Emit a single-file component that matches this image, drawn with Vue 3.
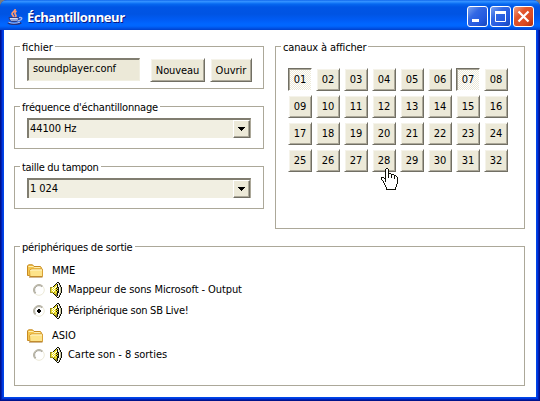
<script setup>
const channels = Array.from({ length: 32 }, (_, i) => String(i + 1).padStart(2, '0'))
const active = ['01', '07']
const combos = [
  { label: "fréquence d'échantillonnage", value: '44100 Hz', cls: 'freq' },
  { label: 'taille du tampon', value: '1 024', cls: 'buffer' },
]
const drivers = [
  {
    name: 'MME',
    outputs: [
      { name: 'Mappeur de sons Microsoft - Output', checked: false, cls: 'mapper' },
      { name: 'Périphérique son SB Live!', checked: true, cls: 'live' },
    ],
  },
  { name: 'ASIO', outputs: [{ name: 'Carte son - 8 sorties', checked: false, cls: 'card' }] },
]

// Pixel maps: one character per pixel
const cursorMap = [
  '.....kk..........',
  '....kwwk.........',
  '....kwwk.........',
  '....kwwk.........',
  '....kwwk.........',
  '....kwwkkk.......',
  '....kwwkwwkkk....',
  '....kwwkwwkwwkk..',
  '....kwwkwwkwwkwk.',
  'kkk.kwwkwwkwwkwwk',
  'kwwkkwwwwwwwwkwwk',
  'kwwwkwwwwwwwwwwwk',
  '.kwwkwwwwwwwwwwwk',
  '..kwkwwwwwwwwwwwk',
  '..kwwwwwwwwwwwwwk',
  '...kwwwwwwwwwwwwk',
  '...kwwwwwwwwwwwk.',
  '....kwwwwwwwwwwk.',
  '....kwwwwwwwwwwk.',
  '.....kwwwwwwwwk..',
  '.....kwwwwwwwwk..',
  '.....kkkkkkkkkk..',
]
const speakerMap = [
  '.......kk...',
  '......kwgk..',
  '.....kykwk..',
  '....kyyk.gk.',
  '...kyywk.gk.',
  'ooywywykk.gk',
  'oywywykyk.gk',
  'oyywyyykk.gk',
  'oywywykyk.gk',
  'oyywyyykk.gk',
  'oooyoyykk.gk',
  '...kyyok.gk.',
  '....kook.gk.',
  '.....kokwk..',
  '......kwgk..',
  '.......kk...',
]
const colors = { k: '#101008', w: '#ffffff', y: '#eee02c', g: '#c9c7a2', o: '#968c22' }
const pixels = (map) =>
  map.flatMap((row, y) =>
    [...row].map((c, x) => ({ x, y, fill: colors[c] })).filter((p) => p.fill)
  )
const cursorPixels = pixels(cursorMap)
const speakerPixels = pixels(speakerMap)
</script>

<template>
  <div class="window">
    <header class="titlebar">
      <svg class="java" width="16" height="16" viewBox="0 0 16 16" fill="none">
        <path d="M8 0c1 2-3.500 3-3 5 .3 1.200 2 1.500 1.500 3.500M9.500 2C7 3.500 8 5 8.700 6s0 2-1 2.500" stroke="#ff9a70" stroke-width="1.600" />
        <path d="M2 8.500h10c-.2 2-1.200 3.500-2.200 4h-5.300c-1.200-.7-2.300-1.700-2.500-4z" fill="#8da2d8" stroke="#242c74" stroke-width=".8" />
        <path d="M3 9.500h7.500" stroke="#d8ddf6" />
        <path d="M12 8.700c4.200-1 3.800 2.500-1.500 3.300" stroke="#a9b4e6" stroke-width="1.300" />
        <path d="M.8 13.800c3 2 10 2 13.500 0" stroke="#28307a" stroke-width="1.600" />
        <path d="M1.500 13.200c3 1.300 8 1.300 11.500 0" stroke="#b4bfe8" stroke-width="1" />
      </svg>
      <span class="title">Échantillonneur</span>
      <div class="controls">
        <button class="ctl"><svg width="21" height="21"><path d="M5 13h7v3H5z" fill="#fff" /></svg></button>
        <button class="ctl"><svg width="21" height="21"><path d="M5.500 5v10.500h10V5" fill="none" stroke="#fff" /><path d="M5 5h11v3H5z" fill="#fff" /></svg></button>
        <button class="ctl close"><svg width="21" height="21"><path d="M5.500 5.500l10 10m0-10l-10 10" stroke="#fff" stroke-width="2.200" /></svg></button>
      </div>
    </header>

    <main class="content">
      <div class="top">
        <div class="left">
          <section class="group">
            <h2 class="legend">fichier</h2>
            <div class="file-row">
              <div class="field">soundplayer.conf</div>
              <button class="btn new">Nouveau</button>
              <button class="btn open">Ouvrir</button>
            </div>
          </section>
          <section v-for="c in combos" :key="c.label" class="group">
            <h2 class="legend" :class="c.cls">{{ c.label }}</h2>
            <div class="combo">
              <span class="value">{{ c.value }}</span>
              <span class="arrow">
                <svg width="7" height="4" shape-rendering="crispEdges"><path d="M0 0h7v1H0zM1 1h5v1H1zM2 2h3v1H2zM3 3h1v1H3z" /></svg>
              </span>
            </div>
          </section>
        </div>

        <section class="group channels">
          <h2 class="legend chan-legend">canaux à afficher</h2>
          <div class="grid">
            <button v-for="n in channels" :key="n" class="btn chan" :class="{ on: active.includes(n) }">
              {{ n }}
              <svg v-if="n === '28'" class="cursor" width="17" height="22" shape-rendering="crispEdges">
                <rect v-for="(p, i) in cursorPixels" :key="i" :x="p.x" :y="p.y" width="1" height="1" :fill="p.fill" />
              </svg>
            </button>
          </div>
        </section>
      </div>

      <section class="group outputs">
        <h2 class="legend out-legend">périphériques de sortie</h2>
        <div class="tree">
          <div v-for="d in drivers" :key="d.name" class="driver">
            <div class="driver-name">
              <svg width="16" height="14" viewBox="0 0 16 14">
                <path d="M.5 11.500V2L1.500.8h4L7 2.500h6.500l.8 1v8z" fill="#f5c64c" stroke="#c78a23" />
                <path d="M1.500 2.500h4.700l1 1h6" stroke="#fff0b0" fill="none" />
                <path d="M3 12.500L2.500 6.500 4 5h11.500v7.500z" fill="#fde389" stroke="#d9a136" />
                <path d="M3.500 7l1-1H15" stroke="#fff7cc" fill="none" />
                <path d="M2 13h13.500" stroke="#a87426" />
              </svg>
              <span>{{ d.name }}</span>
            </div>
            <label v-for="o in d.outputs" :key="o.name" class="output">
              <svg class="radio" width="12" height="12" viewBox="0 0 12 12">
                <circle cx="6" cy="6" r="5.300" fill="#fff" stroke="#ece9d8" />
                <path d="M2.200 9.800A5.300 5.300 0 0 1 9.800 2.200" fill="none" stroke="#aca899" />
                <path d="M2.900 9A4.300 4.300 0 0 1 9 2.900" fill="none" stroke="#8b887b" stroke-width=".7" />
                <path v-if="o.checked" d="M5 4h2v1h1v2H7v1H5V7H4V5h1z" fill="#000" />
              </svg>
              <svg class="speaker" width="12" height="16" shape-rendering="crispEdges">
                <rect v-for="(p, i) in speakerPixels" :key="i" :x="p.x" :y="p.y" width="1" height="1" :fill="p.fill" />
              </svg>
              <span :class="o.cls">{{ o.name }}</span>
            </label>
          </div>
        </div>
      </section>
    </main>
  </div>
</template>

<style>
body {
  margin: 0;
  background: #7b7b7b;
}
</style>

<style scoped>
* {
  box-sizing: border-box;
}
.window {
  width: 540px;
  height: 401px;
  display: flex;
  flex-direction: column;
  overflow: hidden;
  border-radius: 7px 7px 0 0;
  background: #0831d9;
  font: 11px/14px 'DejaVu Sans Condensed', 'DejaVu Sans', sans-serif;
  font-stretch: condensed;
  color: #000;
  white-space: nowrap;
}
.titlebar {
  height: 30px;
  flex: none;
  display: flex;
  align-items: center;
  padding: 3px 6px 0 7px;
  background: linear-gradient(#0058e6 0, #3a93ff 1px, #2a8cff 2px, #0668f0 4px, #0055e5 7px, #0054e3 14px, #005cf5 20px, #0066ff 24px, #0066fe 26px, #0054e8 28px, #0040cb 30px);
}
.title {
  margin-left: 4px;
  font: bold 13px/16px 'Open Sans', sans-serif;
  letter-spacing: -0.4px;
  color: #fff;
  text-shadow: 1px 1px 0 #0a1883;
}
.controls {
  margin-left: auto;
  display: flex;
  gap: 2px;
}
.ctl {
  width: 21px;
  height: 21px;
  padding: 0;
  border: 1px solid #fff;
  border-radius: 3px;
  background: linear-gradient(135deg, #7ba2f0, #3368e4 35%, #2459df 70%, #1747bb);
  overflow: hidden;
}
.ctl svg {
  display: block;
  margin: -1px;
}
.close {
  background: linear-gradient(135deg, #f0a184, #e2552c 35%, #db4a22 70%, #b02f0f);
}
.content {
  flex: 1;
  margin: 0 4px 4px;
  padding: 16px 11px 11px 10px;
  background: #fff;
  box-shadow: 0 0 0 1px #0046e8, 0 0 0 2px #0038dc, 0 0 0 3px #001fb5, 0 0 0 4px #00138c;
  clip-path: inset(0 -4px -4px -4px);
  display: flex;
  flex-direction: column;
  gap: 17px;
}
.top {
  display: grid;
  grid-template-columns: 250px 250px;
  gap: 11px;
  height: 183px;
}
.left {
  display: flex;
  flex-direction: column;
  gap: 17px;
}
.group {
  height: 43px;
  border: 1px solid #aca899;
}
.legend {
  width: fit-content;
  height: 14px;
  margin: -7px 0 0 5px;
  padding: 1px 2px 0;
  background: #fff;
  font: inherit;
}
.freq,
.out-legend {
  letter-spacing: -0.2px;
}
.buffer {
  letter-spacing: -0.3px;
}
.chan-legend {
  letter-spacing: -0.15px;
}
.file-row {
  display: flex;
  padding: 4px 0 0 12px;
}
.field {
  width: 113px;
  height: 23px;
  padding: 2px 0 0 4px;
  background: #ece9d8;
  border-style: solid;
  border-width: 2px 1px 1px 2px;
  border-color: #807d70 #f1efe2 #f1efe2 #807d70;
  letter-spacing: -0.1px;
}
.btn {
  padding: 0;
  border: 1px solid;
  border-color: #fff #716f64 #716f64 #fff;
  background: #ece9d8;
  box-shadow: inset 1px 1px #f5f3ea, inset -1px -1px #aca899;
  font: inherit;
  color: #000;
  height: 24px;
}
.new,
.open {
  padding-top: 1px;
}
.new {
  width: 55px;
  margin-left: 10px;
  letter-spacing: -0.1px;
}
.open {
  width: 42px;
  margin-left: 5px;
}
.combo {
  width: 224px;
  height: 20px;
  margin: 4px 0 0 12px;
  display: flex;
  justify-content: space-between;
  background: #f1efe2;
  border-style: solid;
  border-width: 2px 1px 0 2px;
  border-color: #807d70 #aca899 #fff #807d70;
}
.value {
  padding: 2px 0 0 1px;
  letter-spacing: -0.1px;
}
.arrow {
  width: 17px;
  height: 18px;
  display: flex;
  align-items: center;
  justify-content: center;
  border: 1px solid;
  border-color: #fff #716f64 #716f64 #fff;
  background: #ece9d8;
  box-shadow: inset -1px -1px #aca899;
}
.channels {
  height: 183px;
}
.grid {
  display: grid;
  grid-template-columns: repeat(8, 24px);
  grid-auto-rows: 23px;
  gap: 4px;
  padding: 14px 0 0 12px;
}
.chan {
  position: relative;
  height: 23px;
  letter-spacing: -0.1px;
}
.on {
  border-color: #716f64 #fff #fff #716f64;
  box-shadow: inset 1px 1px #aca899;
  background: repeating-conic-gradient(#ece9d8 0 25%, #fff 0 50%) 0 0 / 2px 2px;
}
.cursor {
  position: absolute;
  left: 8px;
  top: 18px;
  z-index: 1;
}
.outputs {
  height: 140px;
}
.tree {
  display: flex;
  flex-direction: column;
  gap: 6px;
  padding: 8px 0 0 12px;
}
.driver-name,
.output {
  display: flex;
  align-items: center;
}
.driver-name {
  height: 17px;
  gap: 9px;
}
.output {
  height: 21px;
}
.mapper {
  letter-spacing: -0.1px;
}
.live {
  letter-spacing: -0.25px;
}
.card {
  letter-spacing: -0.05px;
}
.radio {
  margin-left: 6px;
}
.speaker {
  margin: 1px 6px 0 5px;
}
</style>
